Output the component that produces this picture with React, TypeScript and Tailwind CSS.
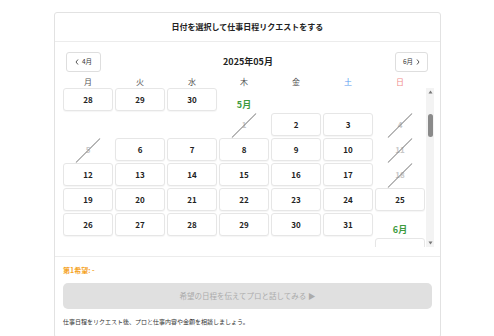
import React from "react";

const F = "font-['Noto_Sans_CJK_JP','Noto_Sans',sans-serif]";

type Item = { r: number; c: number; kind: "day" | "off" | "label"; text: string };

const colCls = ["", "col-start-1", "col-start-2", "col-start-3", "col-start-4", "col-start-5", "col-start-6", "col-start-7"];
const rowCls = ["", "row-start-1", "row-start-2", "row-start-3", "row-start-4", "row-start-5", "row-start-6", "row-start-7"];

const items: Item[] = [];
const add = (r: number, c: number, kind: Item["kind"], text: string) => items.push({ r, c, kind, text });
add(1, 1, "day", "28");
add(1, 2, "day", "29");
add(1, 3, "day", "30");
add(1, 4, "label", "5月");
add(2, 4, "off", "1");
add(2, 5, "day", "2");
add(2, 6, "day", "3");
add(2, 7, "off", "4");
add(3, 1, "off", "5");
[6, 7, 8, 9, 10].forEach((d, i) => add(3, i + 2, "day", String(d)));
add(3, 7, "off", "11");
[12, 13, 14, 15, 16, 17].forEach((d, i) => add(4, i + 1, "day", String(d)));
add(4, 7, "off", "18");
[19, 20, 21, 22, 23, 24, 25].forEach((d, i) => add(5, i + 1, "day", String(d)));
[26, 27, 28, 29, 30, 31].forEach((d, i) => add(6, i + 1, "day", String(d)));
add(6, 7, "label", "6月");
add(7, 7, "day", "1");

const weekdays = [
  { t: "月", c: "text-[#555]" },
  { t: "火", c: "text-[#555]" },
  { t: "水", c: "text-[#555]" },
  { t: "木", c: "text-[#555]" },
  { t: "金", c: "text-[#555]" },
  { t: "土", c: "text-[#5b9bf0]" },
  { t: "日", c: "text-[#f08a8a]" },
];

function Cell({ it }: { it: Item }) {
  const pos = `${colCls[it.c]} ${rowCls[it.r]}`;
  if (it.kind === "label") {
    return (
      <div className={`${pos} flex items-end justify-center pb-[0px] text-[9px] leading-[12px] font-bold text-[#3e9b3e]`}>
        {it.text}
      </div>
    );
  }
  if (it.kind === "off") {
    return (
      <div className={`${pos} relative flex items-center justify-center`}>
        <span className="text-[8px] font-bold text-[#c8c8c8]">{it.text}</span>
        <div className="absolute left-1/2 top-1/2 w-[34px] h-[1px] -ml-[17px] bg-[#8a8a8a] -rotate-45" />
      </div>
    );
  }
  return (
    <div
      className={`${pos} flex items-center justify-center bg-white border border-[#e6e6e6] rounded-[3px] shadow-[0_1px_1px_rgba(0,0,0,0.04)] text-[8px] font-bold text-[#222]`}
    >
      {it.text}
    </div>
  );
}

export default function App() {
  return (
    <div className={`w-[494px] h-[336px] bg-white overflow-hidden ${F}`}>
      <div className="ml-[54px] mt-[12px] w-[387px] h-[326px] border border-[#e2e2e2] rounded-[3px] flex flex-col">
        <div className="h-[29px] border-b border-[#ececec] flex items-center justify-center text-[8px] font-bold text-[#222]">
          日付を選択して仕事日程リクエストをする
        </div>
        <div className="pl-[8px] pr-[5px] pt-[10px] pb-[9px] border-b border-[#ececec]">
          <div className="pl-[3px] pr-[7px] h-[20px] flex items-center justify-between">
            <div className="w-[35px] h-[20px] border border-[#dedede] rounded-[3px] flex items-center justify-center gap-[3px] text-[6.5px] text-[#333]">
              <svg width="4" height="6" viewBox="0 0 4 6">
                <polyline points="3,0.5 1,3 3,5.5" fill="none" stroke="#444" strokeWidth="0.9" />
              </svg>
              <span>4月</span>
            </div>
            <div className="text-[9px] font-bold text-[#222]">2025年05月</div>
            <div className="w-[33px] h-[20px] border border-[#dedede] rounded-[3px] flex items-center justify-center gap-[3px] text-[6.5px] text-[#333]">
              <span>6月</span>
              <svg width="4" height="6" viewBox="0 0 4 6">
                <polyline points="1,0.5 3,3 1,5.5" fill="none" stroke="#444" strokeWidth="0.9" />
              </svg>
            </div>
          </div>
          <div className="w-[362px] grid grid-cols-7 gap-x-[2px] mt-[3px] h-[13px] items-center">
            {weekdays.map((w) => (
              <div key={w.t} className={`text-center text-[8px] leading-[10px] ${w.c}`}>
                {w.t}
              </div>
            ))}
          </div>
          <div className="flex">
            <div className="w-[362px] h-[159px] overflow-hidden">
              <div className="grid grid-cols-7 auto-rows-[23px] gap-x-[2px] gap-y-[2px]">
                {items.map((it, i) => (
                  <Cell key={i} it={it} />
                ))}
              </div>
            </div>
            <div className="ml-[1px] w-[8px] h-[159px] bg-[#f3f3f3] flex flex-col items-center">
              <svg width="5" height="4" viewBox="0 0 5 4" className="mt-[2px]">
                <polygon points="2.5,0.5 4.5,3.5 0.5,3.5" fill="#777" />
              </svg>
              <div className="mt-[20px] w-[5px] h-[23px] rounded-[3px] bg-[#8a8a8a]" />
              <div className="flex-1" />
              <svg width="5" height="4" viewBox="0 0 5 4" className="mb-[2px]">
                <polygon points="0.5,0.5 4.5,0.5 2.5,3.5" fill="#777" />
              </svg>
            </div>
          </div>
        </div>
        <div className="px-[8px] pt-[8px]">
          <div className="text-[7px] leading-[10px] font-bold text-[#f5a31f]">第1希望: -</div>
          <div className="mt-[8px] w-[369px] h-[26px] rounded-[5px] bg-[#e0e0e0] flex items-center justify-center text-[7.5px] text-[#ababab]">
            希望の日程を伝えてプロと話してみる ▶
          </div>
          <div className="mt-[9px] text-[6px] leading-[8px] text-[#333]">
            仕事日程をリクエスト後、プロと仕事内容や金額を相談しましょう。
          </div>
        </div>
      </div>
    </div>
  );
}
